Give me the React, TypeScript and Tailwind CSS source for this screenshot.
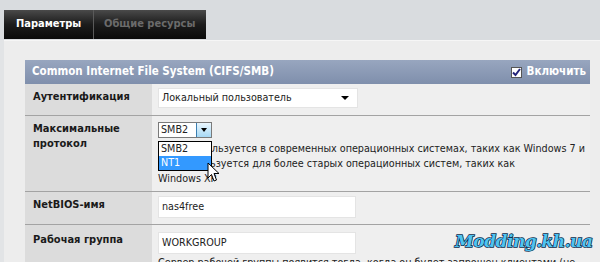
import React from 'react'

const label = "font-['DejaVu_Sans_Condensed','DejaVu_Sans',sans-serif] text-[11px] font-bold text-[#1a1a1a]"
const body = "font-['DejaVu_Sans_Condensed','DejaVu_Sans',sans-serif] text-[10.7px] text-[#222]"

const Row = ({ title, children, cls, pt = 'pt-[5px]' }: { title: React.ReactNode; children: React.ReactNode; cls: string; pt?: string }) => (
  <div className={`flex border-b border-[#a3a3a3] ${cls}`}>
    <div className={`w-[127px] shrink-0 bg-[#dcdcdc] pl-2 ${pt} leading-[15px] ${label}`}>{title}</div>
    <div className="flex-1 bg-[#efefef] pl-[6px] pt-[4px]">{children}</div>
  </div>
)

const Cursor = () => (
  <svg width="13" height="21" viewBox="0 0 13 21" className="absolute left-[207px] top-[162px]">
    <path d="M1 1 L1 16 L4.5 12.5 L7 19 L9.5 18 L7 11.5 L12 11.5 Z" fill="#fff" stroke="#000" strokeWidth="1" strokeLinejoin="round" />
  </svg>
)

export default function App() {
  return (
    <div className="relative w-[600px] h-[262px] overflow-hidden bg-[#e2e4e6]">
      {/* top bar with tabs */}
      <div className="h-[40px] bg-[#d9dcdf] pt-[10px] pl-[4px]">
        <div className="flex h-[29px] w-[202px] bg-gradient-to-b from-[#4a4a4a] via-[#1c1c1c] to-[#0a0a0a] font-['DejaVu_Sans_Condensed','DejaVu_Sans',sans-serif] text-[11px] font-bold">
          <div className="flex w-[90px] items-center pl-[12px] text-white border-r border-[#5a5a5a]">Параметры</div>
          <div className="flex flex-1 items-center pl-[10px] text-[#6b6b6b]">Общие ресурсы</div>
        </div>
      </div>

      {/* content */}
      <div className="ml-[4px] h-full border-t border-[#f6f6f6] bg-[#ededed] pl-[21px] pr-[10px] pt-[19px]">
        <div className="flex h-[24px] items-center justify-between bg-gradient-to-b from-[#98a6bf] to-[#7f8fac] pl-[7px] pr-[4px] font-['DejaVu_Sans_Condensed','DejaVu_Sans',sans-serif] text-[11.5px] font-bold text-white">
          <span>Common Internet File System (CIFS/SMB)</span>
          <span className="flex items-center gap-[5px]">
            <span className="flex h-[11px] w-[11px] items-center justify-center border border-[#555] bg-white">
              <svg width="9" height="9" viewBox="0 0 9 9"><path d="M1 4.5 L3.5 7 L8 1" fill="none" stroke="#23237a" strokeWidth="2" /></svg>
            </span>
            Включить
          </span>
        </div>

        <Row title="Аутентификация" cls="h-[32px]">
          <div className={`flex h-[20px] w-[200px] items-center justify-between border border-[#e4e4e4] bg-white pl-[3px] pr-[8px] ${body}`}>
            <span>Локальный пользователь</span>
            <span className="border-x-[4px] border-t-[4px] border-x-transparent border-t-black" />
          </div>
        </Row>

        <Row title={<>Максимальные<br />протокол</>} cls="h-[76px]">
          <div className="pt-[2px]">
            <div className={`flex h-[16px] w-[54px] items-stretch border border-[#7a7a7a] bg-white ${body}`}>
              <span className="flex-1 pl-[2px] leading-[14px]">SMB2</span>
              <span className="flex w-[15px] items-center justify-center border-l border-[#3c7fb1] bg-gradient-to-b from-[#eaf6fd] to-[#a7d9f5]">
                <span className="border-x-[3.5px] border-t-[4px] border-x-transparent border-t-black" />
              </span>
            </div>
            <div className={`mt-[3px] whitespace-nowrap leading-[15px] ${body}`}>
              <div>SMB2 используется в современных операционных системах, таких как Windows 7 и</div>
              <div>NT1 используется для более старых операционных систем, таких как</div>
              <div>Windows XP</div>
            </div>
          </div>
        </Row>

        <Row title="NetBIOS-имя" cls="h-[33px]">
          <div className={`h-[22px] w-[198px] border border-[#e4e4e4] bg-white pl-[3px] leading-[20px] ${body}`}>nas4free</div>
        </Row>

        <Row title="Рабочая группа" cls="h-[60px] border-b-0" pt="pt-[7px]">
          <div className="pt-[3px]">
            <div className={`h-[22px] w-[198px] border border-[#e4e4e4] bg-white pl-[3px] leading-[20px] ${body}`}>WORKGROUP</div>
            <div className={`mt-[1px] whitespace-nowrap leading-[15px] ${body}`}>Сервер рабочей группы появится тогда, когда он будет запрошен клиентами (не</div>
          </div>
        </Row>
      </div>

      {/* open dropdown list */}
      <div className={`absolute left-[158px] top-[141px] w-[54px] border border-black bg-white leading-[14px] ${body}`}>
        <div className="pl-[2px]">SMB2</div>
        <div className="bg-[#3399ff] pl-[2px] text-white">NT1</div>
      </div>
      <Cursor />

      {/* watermark */}
      <div className="absolute left-[455px] top-[229px] font-['DejaVu_Serif',serif] text-[17px] font-bold italic tracking-[-0.5px] text-[#4fc3f0] [-webkit-text-stroke:1.5px_#0c2a4a] [paint-order:stroke_fill]">
        Modding.kh.ua
      </div>
    </div>
  )
}
